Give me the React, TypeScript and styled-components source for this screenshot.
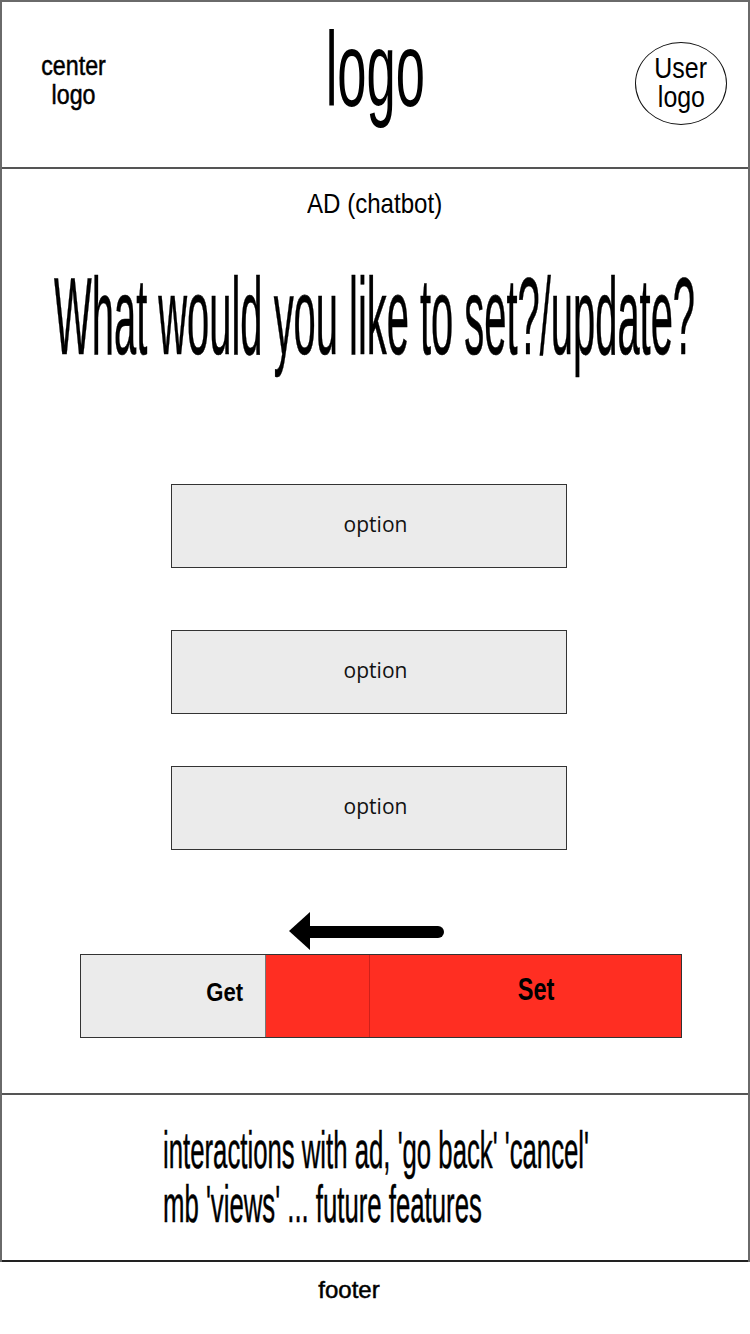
import React from "react";
import styled, { createGlobalStyle } from "styled-components";

const Global = createGlobalStyle`
  html, body { margin: 0; padding: 0; background: #ffffff; }
  body { font-family: "Liberation Sans", Arial, sans-serif; color: #000; overflow-x: hidden; }
  * { box-sizing: border-box; }
`;

const Page = styled.div`
  width: 750px;
  display: flex;
  flex-direction: column;
`;

const Frame = styled.div`
  border-left: 2px solid #6a6a6a;
  border-right: 2px solid #6a6a6a;
  border-top: 2px solid #6a6a6a;
  display: flex;
  flex-direction: column;
`;

const Header = styled.header`
  height: 167px;
  border-bottom: 2px solid #555;
  display: grid;
  grid-template-columns: 144px 1fr 144px;
  align-items: start;
  overflow: hidden;
`;

const Squeeze = styled.span<{ $sx: number; $origin?: string }>`
  display: inline-block;
  white-space: nowrap;
  transform: scaleX(${(p) => p.$sx});
  transform-origin: ${(p) => p.$origin || "center"};
`;

const SideLabel = styled.div`
  margin-top: 50px;
  display: flex;
  flex-direction: column;
  align-items: center;
  font-size: 27px;
  line-height: 29px;
  -webkit-text-stroke: 0.5px #000;
`;

const BigLogo = styled.div`
  margin-top: 15px;
  display: flex;
  justify-content: center;
  font-size: 105px;
  line-height: 105px;
`;

const UserCell = styled.div`
  margin-top: 40px;
  padding-left: 31px;
  display: flex;
`;

const UserBadge = styled.div`
  width: 92px;
  height: 83px;
  border: 1.5px solid #111;
  border-radius: 50%;
  display: flex;
  flex-direction: column;
  align-items: center;
  justify-content: center;
  font-size: 29px;
  line-height: 29px;
  padding-bottom: 1px;
`;

const Main = styled.main`
  height: 926px;
  border-bottom: 2px solid #555;
  display: flex;
  flex-direction: column;
  align-items: stretch;
  overflow: hidden;
`;

const AdLine = styled.div`
  margin-top: 21px;
  display: flex;
  justify-content: center;
  font-size: 28px;
  line-height: 28px;
`;

const Headline = styled.h1`
  margin: 44px 0 0;
  display: flex;
  justify-content: center;
  font-size: 109px;
  line-height: 109px;
  font-weight: 400;
  -webkit-text-stroke: 0.6px #000;
`;

const OptionList = styled.div`
  display: flex;
  flex-direction: column;
  align-items: flex-start;
  padding-left: 169px;
`;

const OptionButton = styled.button<{ $mt: number }>`
  margin-top: ${(p) => p.$mt}px;
  width: 396px;
  height: 84px;
  background: #ebebeb;
  border: 1px solid #333;
  padding: 0 0 4px 13px;
  font-family: "Open Sans", "Liberation Sans", sans-serif;
  font-size: 21px;
  color: #111;
  display: flex;
  align-items: center;
  justify-content: center;
`;

const ArrowRow = styled.div`
  margin-top: 62px;
  padding-left: 284px;
  display: flex;
`;

const Toggle = styled.div`
  margin: 2px 0 0 78px;
  width: 602px;
  height: 84px;
  border: 1px solid #333;
  display: flex;
`;

const GetSeg = styled.div`
  width: 185px;
  background: #ebebeb;
  border-right: 1px solid #777;
  display: flex;
  align-items: center;
  justify-content: flex-end;
  padding: 0 19px 8px 0;
  font-weight: 700;
  font-size: 26px;
`;

const RedSeg = styled.div<{ $grow?: boolean }>`
  background: #ff2e22;
  ${(p) => (p.$grow ? "flex: 1;" : "width: 103px;")}
  ${(p) => (p.$grow ? "border-left: 1px solid #d0201a;" : "")}
  display: flex;
  align-items: center;
  justify-content: center;
  padding: 0 0 12px 22px;
  font-weight: 700;
  font-size: 31px;
`;

const Notes = styled.section`
  height: 167px;
  border-bottom: 2px solid #222;
  padding: 28px 0 0 161px;
  display: flex;
  flex-direction: column;
  align-items: flex-start;
  overflow: hidden;
  font-size: 52px;
  line-height: 54px;
  -webkit-text-stroke: 0.5px #000;
`;

const FooterBar = styled.footer`
  height: 74px;
  display: flex;
  justify-content: center;
  padding: 16px 52px 0 0;
  font-size: 24px;
  line-height: 24px;
  -webkit-text-stroke: 0.5px #000;
`;

const Arrow = () => (
  <svg width="160" height="40" viewBox="0 0 160 40">
    <polygon points="3,19 24,0 24,38" fill="#000" />
    <line x1="20" y1="20" x2="152" y2="20" stroke="#000" strokeWidth="12" strokeLinecap="round" />
  </svg>
);

export default function App() {
  return (
    <Page>
      <Global />
      <Frame>
        <Header>
          <SideLabel>
            <Squeeze $sx={0.86}>center</Squeeze>
            <Squeeze $sx={0.86}>logo</Squeeze>
          </SideLabel>
          <BigLogo>
            <Squeeze $sx={0.5}>logo</Squeeze>
          </BigLogo>
          <UserCell>
            <UserBadge>
              <Squeeze $sx={0.86}>User</Squeeze>
              <Squeeze $sx={0.86}>logo</Squeeze>
            </UserBadge>
          </UserCell>
        </Header>
        <Main>
          <AdLine>
            <Squeeze $sx={0.86}>AD (chatbot)</Squeeze>
          </AdLine>
          <Headline>
            <Squeeze $sx={0.366}>What would you like to set?/update?</Squeeze>
          </Headline>
          <OptionList>
            <OptionButton $mt={113}>option</OptionButton>
            <OptionButton $mt={62}>option</OptionButton>
            <OptionButton $mt={52}>option</OptionButton>
          </OptionList>
          <ArrowRow>
            <Arrow />
          </ArrowRow>
          <Toggle>
            <GetSeg>
              <Squeeze $sx={0.85}>Get</Squeeze>
            </GetSeg>
            <RedSeg />
            <RedSeg $grow>
              <Squeeze $sx={0.76}>Set</Squeeze>
            </RedSeg>
          </Toggle>
        </Main>
        <Notes>
          <Squeeze $sx={0.495} $origin="left">interactions with ad, 'go back' 'cancel'</Squeeze>
          <Squeeze $sx={0.495} $origin="left">mb 'views' ... future features</Squeeze>
        </Notes>
      </Frame>
      <FooterBar>
        <Squeeze $sx={1}>footer</Squeeze>
      </FooterBar>
    </Page>
  );
}
